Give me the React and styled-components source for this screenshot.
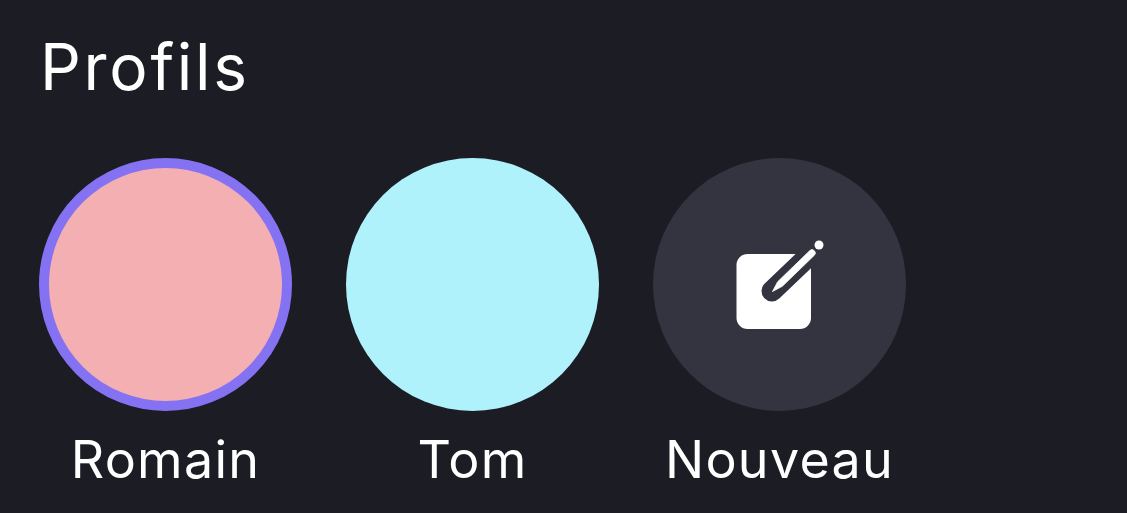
import React from 'react';
import styled, { createGlobalStyle } from 'styled-components';

const GlobalStyle = createGlobalStyle`
  html, body {
    margin: 0;
    padding: 0;
    height: 100%;
    background: #1b1c24;
  }
`;

const Page = styled.div`
  width: 1127px;
  height: 513px;
  box-sizing: border-box;
  padding: 28px 0 0 39px;
  background: #1b1c24;
  color: #fff;
  font-family: Inter, "Liberation Sans", sans-serif;
  overflow: hidden;
`;

const Title = styled.h1`
  margin: 0 0 53px 1px;
  font-size: 64px;
  line-height: 77px;
  font-weight: 400;
  letter-spacing: 2.7px;
`;

const Row = styled.div`
  display: flex;
  gap: 54px;
`;

const Profile = styled.div`
  width: 253px;
  display: flex;
  flex-direction: column;
  align-items: center;
`;

const Avatar = styled.div`
  width: 253px;
  height: 253px;
  box-sizing: border-box;
  border-radius: 50%;
  background: ${(p) => p.$color};
  border: ${(p) => (p.$active ? '10px solid #8472f3' : 'none')};
  display: flex;
  align-items: center;
  justify-content: center;
`;

const Name = styled.div`
  margin-top: 18px;
  font-size: 52px;
  line-height: 62px;
  letter-spacing: 1.3px;
`;

function NewIcon() {
  return (
    <svg width="100" height="100" viewBox="0 0 100 100" fill="none">
      <rect x="6.5" y="19" width="74.5" height="75" rx="11" fill="#fff" />
      <path d="M42 56 L85 15" stroke="#33343f" strokeWidth="21" strokeLinecap="round" />
      <path
        d="M42.5 56.5 L47.7 46.7 L79.7 15.7 A3.2 3.2 0 0 1 84.3 20.3 L52.3 51.3 Z"
        fill="#fff"
        stroke="#fff"
        strokeWidth="0.8"
        strokeLinejoin="round"
      />
      <circle cx="89" cy="10" r="4.5" fill="#fff" />
    </svg>
  );
}

export default function App() {
  return (
    <>
      <GlobalStyle />
      <Page>
        <Title>Profils</Title>
        <Row>
          <Profile>
            <Avatar $color="#f3afb1" $active />
            <Name>Romain</Name>
          </Profile>
          <Profile>
            <Avatar $color="#b0f2fb" />
            <Name>Tom</Name>
          </Profile>
          <Profile>
            <Avatar $color="#33343f">
              <NewIcon />
            </Avatar>
            <Name>Nouveau</Name>
          </Profile>
        </Row>
      </Page>
    </>
  );
}
